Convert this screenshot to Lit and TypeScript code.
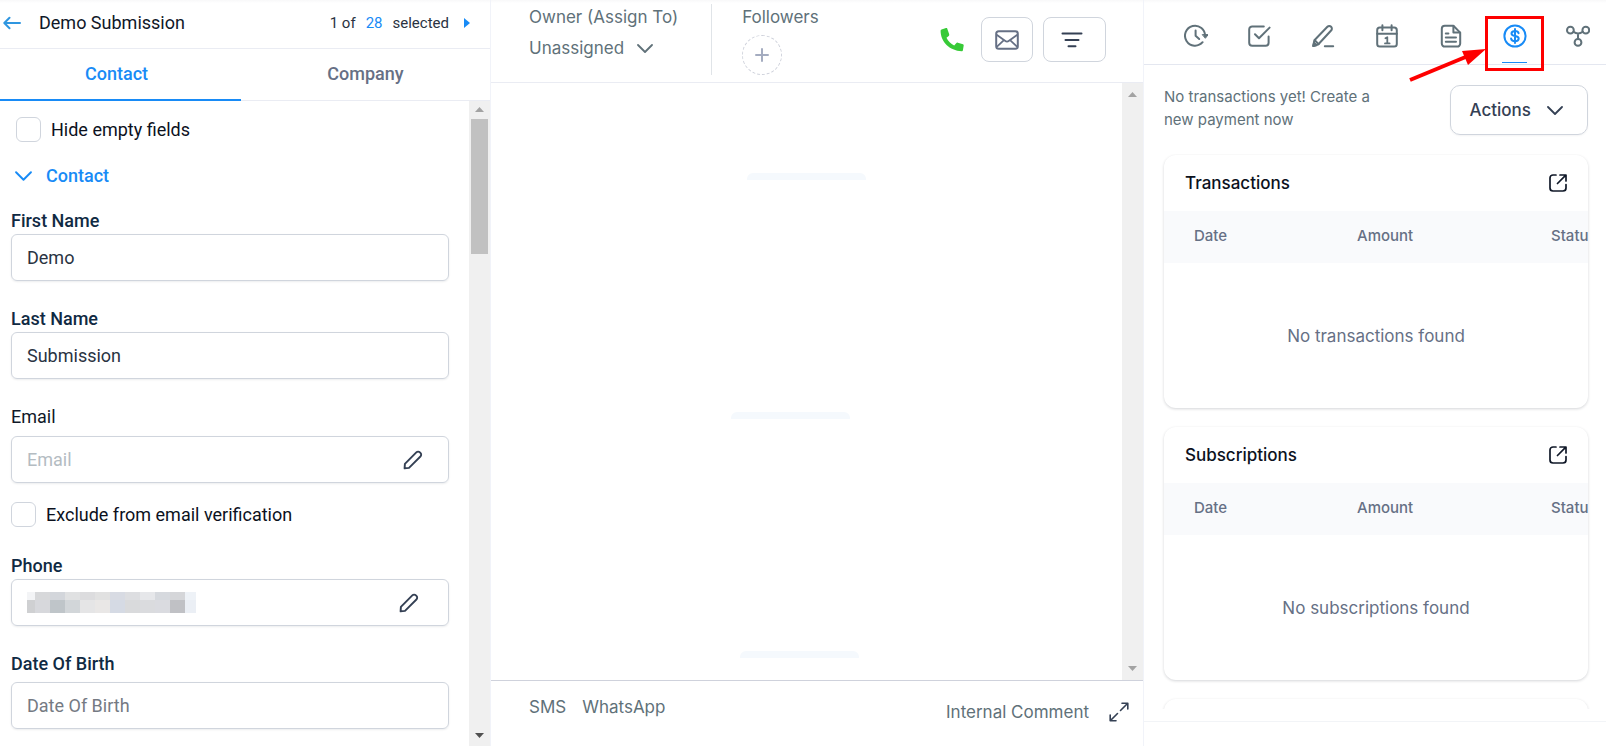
import { LitElement, html, css, svg, nothing } from "lit";
import { customElement, property, state } from "lit/decorators.js";
import { classMap } from "lit/directives/class-map.js";

const chevron = (w: number, h: number) => html`
  <svg class="line" width=${w} height=${h} viewBox="0 0 16 9" aria-hidden="true">
    <path d="M1 1l7 7 7-7" stroke-width="1.8" />
  </svg>`;

const pencil = html`
  <svg class="line" width="20" height="20" viewBox="0 0 20 20" aria-hidden="true">
    <path d="M1.600 18.400l.3-4.500L13.300 2.400a2.500 2.500 0 0 1 3.600 0l.5.5a2.500 2.500 0 0 1 0 3.600L6 17.900z" stroke-width="1.900" />
  </svg>`;

const tabIcons: Record<string, unknown> = {
  Activity: svg`
    <path d="M18.6 18.2A10 10 0 1 1 21 12.3" />
    <path d="M11.6 6.4v5.4l3.6 3.2" />
    <path d="M18.6 10.6h5.6l-2.6 3.4z" fill="currentColor" stroke-width="1" />`,
  Tasks: svg`
    <path d="M16.8 2.4H5.2A3 3 0 0 0 2.2 5.400V18.800a3 3 0 0 0 3 3H18.600a3 3 0 0 0 3-3v-6.300" />
    <path d="M8 10.200l4 4L22.600 3.600" />`,
  Notes: svg`
    <path d="M2.200 22l1.200-5.800L16.400 2.800a2.600 2.600 0 0 1 3.700 0 2.600 2.600 0 0 1 0 3.700L7.400 20.200z" />
    <path d="M3.800 16.200l3.800 3.900M13.800 22.200h8.400" />
    <path d="M2.200 22l.9-3.300 2.300 2.500z" fill="currentColor" />`,
  Appointments: svg`
    <rect x="2.200" y="3.600" width="19.600" height="19" rx="2.600" />
    <path d="M2.200 9.800h19.600M7.400 1.200v5M16.600 1.200v5" />
    <path d="M10.400 14.200l1.900-1v6M10 19.400h4.600" stroke-width="1.800" />`,
  Documents: svg`
    <path d="M14.400 1.800H5.800a3 3 0 0 0-3 3v14.800a3 3 0 0 0 3 3h12.400a3 3 0 0 0 3-3V8.600z" />
    <path d="M14.400 2v6.400h6.600M6.800 9.600h2.600M6.800 13.600h10.200M6.800 17.800h10.200" />`,
  Payments: svg`
    <circle cx="12" cy="12" r="10.600" />
    <path d="M15.600 9.200c-.3-1.500-1.700-2.300-3.600-2.300s-3.500.9-3.500 2.500c0 3.700 7.200 1.600 7.200 5.200 0 1.700-1.600 2.600-3.700 2.600s-3.700-.9-3.900-2.600M12 5v14" />`,
  Associations: svg`
    <circle cx="4.400" cy="6.200" r="3.400" />
    <circle cx="19.800" cy="6.200" r="3.400" />
    <circle cx="12" cy="18.400" r="3.400" />
    <path d="M7.400 7.800c2.800 2 6.600 2 9.400 0M12 9.400v5.400" />`,
};

const base = css`
  *,
  *::before {
    box-sizing: border-box;
  }
  button,
  input {
    font: inherit;
    color: inherit;
    margin: 0;
    padding: 0;
    border: 0;
    background: none;
  }
  button {
    cursor: pointer;
  }
  svg {
    display: block;
    flex: none;
  }
  .line {
    fill: none;
    stroke: currentColor;
    stroke-width: 2;
    stroke-linecap: round;
    stroke-linejoin: round;
  }
`;

@customElement("scroll-rail")
class ScrollRail extends LitElement {
  @property({ type: Boolean }) thumb = false;

  static styles = css`
    :host {
      display: flex;
      flex-direction: column;
      align-items: center;
      flex: none;
      width: 21px;
      padding: 9px 0;
      box-sizing: border-box;
      background: #f0f0f0;
      color: #a3a3a3;
    }
    :host([thumb]) {
      padding: 6px 0 8px;
    }
    svg {
      display: block;
    }
    .thumb {
      width: 17px;
      height: 135px;
      margin-top: 7px;
      background: #c1c1c1;
    }
    .down {
      margin-top: auto;
    }
    :host([thumb]) .down {
      color: #505050;
    }
  `;

  render() {
    return html`
      <svg width="9" height="5" viewBox="0 0 9 5"><path d="M0 5L4.500 0 9 5z" fill="currentColor" /></svg>
      ${this.thumb ? html`<div class="thumb"></div>` : nothing}
      <svg class="down" width="9" height="5" viewBox="0 0 9 5"><path d="M0 0h9L4.500 5z" fill="currentColor" /></svg>
    `;
  }
}

const mosaic: [number, number, string, string][] = [
  [0, 8, "#f3f4f6", "#cfd0d2"],
  [8, 15, "#d7d8da", "#d7d8dc"],
  [23, 15, "#d3d6db", "#bfc5c9"],
  [38, 15, "#e0e1e2", "#d2d6d9"],
  [53, 15, "#dcdcde", "#e5e5e6"],
  [68, 15, "#e1e1e1", "#e9e7e6"],
  [83, 15, "#d8dbe3", "#d5dae4"],
  [98, 15, "#dddee1", "#d9dadc"],
  [113, 15, "#e6e7ea", "#dadbde"],
  [128, 15, "#d6d9de", "#dadbe0"],
  [143, 15, "#d5d6d9", "#c0c1c5"],
  [158, 11, "#eef2f7", "#ebeff5"],
];

@customElement("contact-panel")
class ContactPanel extends LitElement {
  @state() private tab = "Contact";

  static styles = [
    base,
    css`
      :host {
        display: flex;
        flex-direction: column;
        min-width: 0;
        min-height: 0;
        border-right: 1px solid #f1f3f9;
        font: 18px/24px Roboto, sans-serif;
        color: #101828;
      }
      .head {
        display: flex;
        align-items: center;
        height: 49px;
        flex: none;
        padding: 0 20px 2px 3px;
        border-bottom: 1px solid #eaecf3;
      }
      .back {
        color: #2f96e0;
      }
      .name {
        margin: 0 auto 0 18px;
        font: inherit;
      }
      .count {
        display: flex;
        align-items: center;
        gap: 10px;
        font-size: 15px;
        color: #2a3342;
      }
      .count a {
        color: #188bf6;
        text-decoration: none;
      }
      .next {
        margin-left: 5px;
        color: #188bf6;
      }
      .tabs {
        display: flex;
        flex: none;
        height: 52px;
        border-bottom: 1px solid #eaecf3;
        font-weight: 500;
      }
      .tab {
        flex: 1;
        color: #667085;
        margin-bottom: -1px;
        border-bottom: 2px solid transparent;
      }
      .tab:first-child {
        padding-right: 8px;
        flex: 0 1 241px;
      }
      .tab.on {
        color: #188bf6;
        border-color: #188bf6;
      }
      .scroll {
        display: flex;
        flex: 1;
        min-height: 0;
      }
      .form {
        flex: 1;
        min-width: 0;
        overflow: hidden;
        padding: 16px 20px 0 11px;
        color: #0c111d;
      }
      .check {
        display: flex;
        align-items: center;
        gap: 10px;
        height: 25px;
      }
      .check.inset {
        margin-left: 5px;
      }
      .check input {
        appearance: none;
        width: 25px;
        height: 25px;
        border: 1px solid #d0d5dd;
        border-radius: 6px;
        background: #fff;
      }
      .group {
        display: flex;
        align-items: center;
        gap: 14px;
        margin: 22px 0 21px 4px;
        font-weight: 500;
        color: #188bf6;
      }
      .row {
        margin-bottom: 26px;
      }
      .row > label {
        display: block;
        margin-bottom: 1px;
        font-weight: 500;
        color: #102a43;
      }
      .row > label.roomy {
        margin-bottom: 6px;
      }
      .row > label.plain {
        margin-bottom: 7px;
        font-weight: 400;
        color: #101828;
      }
      .row.tight {
        margin-bottom: 19px;
      }
      .check + .row {
        margin-top: 27px;
      }
      .box {
        display: flex;
        align-items: center;
        height: 47px;
        padding: 0 25px 0 15px;
        border: 1px solid #d0d5dd;
        border-radius: 6px;
        box-shadow: 0 1px 2px rgba(16, 24, 40, 0.08);
        color: #2a3342;
      }
      .box input {
        flex: 1;
        min-width: 0;
        height: 100%;
        outline: none;
      }
      .box input::placeholder {
        color: #757a83;
        opacity: 1;
      }
      .box input.pale::placeholder {
        color: #b4bcc2;
      }
      .edit {
        color: #344054;
      }
      .phone {
        padding-right: 29px;
      }
    `,
  ];

  render() {
    return html`
      <header class="head">
        <button class="back" aria-label="Back">
          <svg class="line" width="18" height="14" viewBox="0 0 18 14"><path d="M17 7H1.500M6.500 1.800L1.300 7l5.200 5.200" /></svg>
        </button>
        <h1 class="name">Demo Submission</h1>
        <div class="count">
          <span>1 of</span><a href="#selected">28</a><span>selected</span>
          <button class="next" aria-label="Next contact">
            <svg width="6" height="10" viewBox="0 0 6 10"><path d="M0 0l6 5-6 5z" fill="currentColor" /></svg>
          </button>
        </div>
      </header>
      <div class="tabs" role="tablist">
        ${["Contact", "Company"].map(
          (t) => html`<button
            role="tab"
            class=${classMap({ tab: true, on: this.tab === t })}
            aria-selected=${this.tab === t}
            @click=${() => (this.tab = t)}
          >${t}</button>`
        )}
      </div>
      <div class="scroll">
        <form class="form">
          <div class="check inset">
            <input type="checkbox" id="hide" /><label for="hide">Hide empty fields</label>
          </div>
          <button type="button" class="group">${chevron(17, 10)}Contact</button>
          <div class="row">
            <label for="first">First Name</label>
            <div class="box"><input id="first" .value=${"Demo"} /></div>
          </div>
          <div class="row">
            <label for="last">Last Name</label>
            <div class="box"><input id="last" .value=${"Submission"} /></div>
          </div>
          <div class="row tight">
            <label class="plain" for="email">Email</label>
            <div class="box">
              <input id="email" class="pale" type="email" placeholder="Email" />
              <button type="button" class="edit" aria-label="Edit email">${pencil}</button>
            </div>
          </div>
          <div class="check">
            <input type="checkbox" id="exclude" /><label for="exclude">Exclude from email verification</label>
          </div>
          <div class="row">
            <label for="phone">Phone</label>
            <div class="box phone">
              <svg width="169" height="21" viewBox="0 0 169 21" shape-rendering="crispEdges" aria-hidden="true">
                ${mosaic.map(
                  ([x, w, top, bottom]) => svg`
                    <rect x=${x} width=${w} height="8" fill=${top} />
                    <rect x=${x} y="8" width=${w} height="13" fill=${bottom} />`
                )}
              </svg>
              <input id="phone" type="tel" />
              <button type="button" class="edit" aria-label="Edit phone">${pencil}</button>
            </div>
          </div>
          <div class="row">
            <label class="roomy" for="dob">Date Of Birth</label>
            <div class="box"><input id="dob" placeholder="Date Of Birth" /></div>
          </div>
        </form>
        <scroll-rail thumb></scroll-rail>
      </div>
    `;
  }
}

@customElement("conversation-panel")
class ConversationPanel extends LitElement {
  static styles = [
    base,
    css`
      :host {
        display: flex;
        flex-direction: column;
        min-width: 0;
        min-height: 0;
        border-right: 1px solid #f1f3f9;
        font: 17px/24px Inter, sans-serif;
        color: #607179;
      }
      .head {
        display: flex;
        flex: none;
        height: 83px;
        padding: 4px 37px 0 38px;
        border-bottom: 1px solid #eaecf3;
      }
      .owner {
        height: 71px;
        padding: 1px 33px 0 0;
        border-right: 1px solid #e0e4e8;
      }
      .owner button {
        display: flex;
        align-items: center;
        gap: 13px;
        margin-top: 7px;
      }
      .followers {
        margin: 1px auto 0 30px;
      }
      .add {
        display: grid;
        place-items: center;
        width: 40px;
        height: 40px;
        margin-top: 6px;
        border: 1px dashed #d0d3dc;
        border-radius: 50%;
        color: #a4acc0;
      }
      .actions {
        display: flex;
        align-items: center;
        gap: 10px;
        height: 45px;
        margin-top: 13px;
      }
      .call {
        margin-right: 7px;
        color: #37ca37;
      }
      .tool {
        display: grid;
        place-items: center;
        width: 52px;
        height: 45px;
        border: 1px solid #d0d5dd;
        border-radius: 8px;
        color: #667085;
      }
      .tool.wide {
        width: 63px;
        padding-right: 6px;
        color: #344054;
      }
      .thread {
        display: flex;
        flex: 1;
        min-height: 0;
      }
      .messages {
        flex: 1;
        display: flex;
        flex-direction: column;
        align-items: center;
        gap: 232px;
        padding-top: 90px;
        overflow: hidden;
      }
      .stub {
        flex: none;
        width: 119px;
        height: 7px;
        border-radius: 6px 6px 0 0;
        background: #f5f9fd;
      }
      .stub:nth-child(2) {
        margin-right: 32px;
      }
      .stub:nth-child(3) {
        margin-right: 14px;
      }
      .foot {
        display: flex;
        flex: none;
        gap: 16px;
        height: 66px;
        padding: 14px 14px 0 38px;
        border-top: 1px solid #cfd2dc;
      }
      .foot button {
        height: 24px;
      }
      .end {
        display: flex;
        align-items: center;
        gap: 20px;
        margin-left: auto;
        margin-top: 5px;
        height: 24px;
      }
      .expand {
        color: #344054;
      }
    `,
  ];

  render() {
    return html`
      <header class="head">
        <div class="owner">
          <div>Owner (Assign To)</div>
          <button>Unassigned ${chevron(16, 9)}</button>
        </div>
        <div class="followers">
          <div>Followers</div>
          <button class="add" aria-label="Add follower">
            <svg class="line" width="14" height="14" viewBox="0 0 14 14"><path d="M7 1v12M1 7h12" /></svg>
          </button>
        </div>
        <div class="actions">
          <button class="call" aria-label="Call">
            <svg width="24" height="24" viewBox="0 0 24 24">
              <path fill="currentColor" d="M7.200.6l2 5.600c.2.700 0 1.200-.5 1.700L6.500 9.800c1.700 3.500 4.200 6 7.700 7.700l2-2.300c.4-.5 1-.7 1.600-.5l5.200 1.500c.5.200.8.600.7 1.200l-.8 4.900c-.1.700-.6 1-1.200 1C9.600 22.700.6 14 .6 2.800c0-.7.300-1.100.9-1.300L6 .1c.6-.1 1 0 1.200.5z" />
            </svg>
          </button>
          <button class="tool" aria-label="Email">
            <svg class="line" width="24" height="20" viewBox="0 0 24 20">
              <rect x="1.200" y="1.200" width="21.600" height="17.600" rx="2.500" />
              <path d="M2 5l8 5.800c1.300 1 2.700 1 4 0L22 5M2 16.600l6.400-6M22 16.600l-6.400-6" stroke-width="1.800" />
            </svg>
          </button>
          <button class="tool wide" aria-label="Filter">
            <svg class="line" width="22" height="16" viewBox="0 0 22 16"><path d="M1.500 1.500h19M4.500 8h13M7.500 14.300h7" /></svg>
          </button>
        </div>
      </header>
      <div class="thread">
        <div class="messages">
          <div class="stub"></div>
          <div class="stub"></div>
          <div class="stub"></div>
        </div>
        <scroll-rail></scroll-rail>
      </div>
      <footer class="foot">
        <button>SMS</button>
        <button>WhatsApp</button>
        <div class="end">
          <button>Internal Comment</button>
          <button class="expand" aria-label="Expand">
            <svg class="line" width="20" height="20" viewBox="0 0 20 20">
              <path d="M13 1.200h5.800v5.800M7 18.800H1.200V13M17.500 2.500l-6 6M2.500 17.500l6-6" stroke-width="1.600" />
            </svg>
          </button>
        </div>
      </footer>
    `;
  }
}

@customElement("record-card")
class RecordCard extends LitElement {
  @property() heading = "";
  @property() empty = "";

  static styles = [
    base,
    css`
      :host {
        display: block;
        overflow: hidden;
        flex: none;
        min-height: 56px;
        border-radius: 12px;
        background: #fff;
        box-shadow: 0 1px 3px rgba(16, 24, 40, 0.18);
      }
      .top {
        display: flex;
        align-items: center;
        justify-content: space-between;
        height: 56px;
        padding: 0 21px;
      }
      .title {
        margin: 0;
        font: 500 17px/24px Inter, sans-serif;
        color: #0c111d;
      }
      .open {
        color: #101828;
      }
      .clip {
        overflow: hidden;
      }
      .grid {
        width: 560px;
        table-layout: fixed;
        border-collapse: collapse;
        background: #f9fafc;
      }
      .grid th {
        height: 52px;
        padding: 0 0 2px 30px;
        text-align: left;
        font: 500 15px/20px Inter, sans-serif;
        color: #667085;
      }
      .grid th:nth-child(1) {
        width: 163px;
      }
      .grid th:nth-child(2) {
        width: 194px;
      }
      .none {
        display: grid;
        place-items: center;
        height: 145px;
        margin: 0;
        color: #667085;
      }
    `,
  ];

  render() {
    if (!this.heading) return nothing;
    return html`
      <div class="top">
        <h2 class="title">${this.heading}</h2>
        <button class="open" aria-label=${`Open ${this.heading}`}>
          <svg class="line" width="18" height="18" viewBox="0 0 18 18">
            <path d="M7 1H4a3 3 0 0 0-3 3v10a3 3 0 0 0 3 3h10a3 3 0 0 0 3-3v-3.500M11 1h6v6M16.800 1.200L8.500 9.500" stroke-width="1.700" />
          </svg>
        </button>
      </div>
      <div class="clip">
        <table class="grid">
          <thead>
            <tr><th scope="col">Date</th><th scope="col">Amount</th><th scope="col">Status</th></tr>
          </thead>
        </table>
      </div>
      <p class="none">${this.empty}</p>
    `;
  }
}

@customElement("payments-panel")
class PaymentsPanel extends LitElement {
  @state() private active = "Payments";

  static styles = [
    base,
    css`
      :host {
        display: flex;
        flex-direction: column;
        min-width: 0;
        min-height: 0;
        font: 17px/24px Inter, sans-serif;
        color: #607179;
      }
      .tabs {
        display: flex;
        flex: none;
        justify-content: space-between;
        height: 65px;
        padding: 0 15px 0 39px;
        border-bottom: 1px solid #e4e7f0;
      }
      .tab {
        position: relative;
        display: grid;
        justify-items: center;
        align-content: start;
        width: 25px;
        height: 63px;
        padding-top: 24px;
        border-bottom: 1px solid transparent;
      }
      .tab.on {
        color: #188bf6;
        border-color: #188bf6;
      }
      .frame {
        position: absolute;
        top: 16px;
        left: -17px;
        width: 59px;
        height: 55px;
        border: 3px solid #fe0000;
      }
      .pointer {
        position: absolute;
        top: 48px;
        left: -93px;
      }
      .intro {
        display: flex;
        align-items: flex-start;
        justify-content: space-between;
        flex: none;
        padding: 20px 18px 19px 20px;
      }
      .note {
        width: 220px;
        margin: 0;
        font-size: 15px;
        line-height: 23px;
      }
      .actions {
        display: flex;
        align-items: center;
        gap: 16px;
        height: 50px;
        padding: 0 24px 0 19px;
        border: 1px solid #d0d5dd;
        border-radius: 10px;
        box-shadow: 0 1px 2px rgba(16, 24, 40, 0.05);
        font-weight: 500;
        color: #344054;
      }
      .cards {
        display: flex;
        flex: 1;
        flex-direction: column;
        gap: 19px;
        min-height: 0;
        overflow: hidden;
        padding: 1px 18px 0 20px;
      }
      .bottom {
        flex: none;
        height: 37px;
        padding-top: 12px;
      }
      .rule {
        margin: 0;
        border: 0;
        border-top: 1px solid #f2f4f7;
      }
    `,
  ];

  render() {
    return html`
      <nav class="tabs" aria-label="Record sections">
        ${Object.keys(tabIcons).map(
          (name) => html`<button
            class=${classMap({ tab: true, on: this.active === name })}
            aria-label=${name}
            @click=${() => (this.active = name)}
          >
            <svg class="line" width="24" height="24" viewBox="0 0 24 24">${tabIcons[name]}</svg>
            ${name === "Payments"
              ? html`<span class="frame"></span>
                  <svg class="pointer" width="78" height="34" viewBox="0 0 78 34">
                    <path d="M1 32l58-24" stroke="#fe0000" stroke-width="4" />
                    <path d="M53 3l24-2-18 16z" fill="#fe0000" />
                  </svg>`
              : nothing}
          </button>`
        )}
      </nav>
      <div class="intro">
        <p class="note">No transactions yet! Create a new payment now</p>
        <button class="actions">Actions ${chevron(16, 9)}</button>
      </div>
      <div class="cards">
        <record-card heading="Transactions" empty="No transactions found"></record-card>
        <record-card heading="Subscriptions" empty="No subscriptions found"></record-card>
        <record-card></record-card>
      </div>
      <div class="bottom"><hr class="rule" /></div>
    `;
  }
}

@customElement("app-root")
class AppRoot extends LitElement {
  static styles = css`
    :host {
      display: grid;
      grid-template-columns: minmax(0, 491fr) minmax(0, 653fr) minmax(0, 462fr);
      grid-template-rows: minmax(0, 1fr);
      height: 100vh;
      overflow: hidden;
      background: linear-gradient(#f8f8f9, #fff 3px);
    }
  `;

  render() {
    return html`
      <contact-panel></contact-panel>
      <conversation-panel></conversation-panel>
      <payments-panel></payments-panel>
    `;
  }
}
